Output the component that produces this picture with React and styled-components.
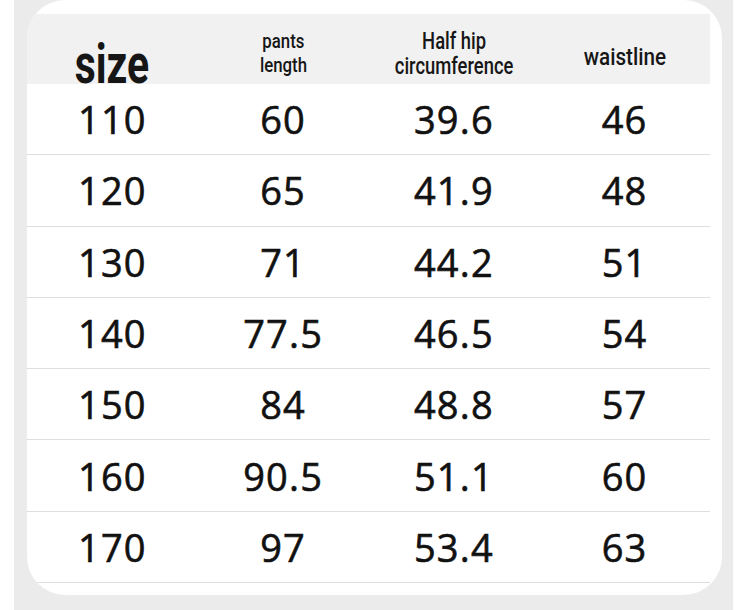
import React from "react";
import styled, { createGlobalStyle } from "styled-components";

const GlobalStyle = createGlobalStyle`
  html, body {
    margin: 0;
    padding: 0;
    background: #ffffff;
  }
`;

const rows = [
  ["110", "60", "39.6", "46"],
  ["120", "65", "41.9", "48"],
  ["130", "71", "44.2", "51"],
  ["140", "77.5", "46.5", "54"],
  ["150", "84", "48.8", "57"],
  ["160", "90.5", "51.1", "60"],
  ["170", "97", "53.4", "63"],
];

const App = () => {
  return (
    <>
      <GlobalStyle />
      <Panel>
        <Card>
          <HeadRow>
            <HeadCell $big>
              <Label $size={56} $weight={700} $scale={0.73}>
                size
              </Label>
            </HeadCell>
            <HeadCell $pad={7}>
              <Label $size={21} $scale={0.8}>
                pants
                <br />
                length
              </Label>
            </HeadCell>
            <HeadCell $pad={5}>
              <Label $size={23} $scale={0.8} $lh={25}>
                Half hip
                <br />
                circumference
              </Label>
            </HeadCell>
            <HeadCell $pad={15}>
              <Label $size={24} $scale={0.86}>
                waistline
              </Label>
            </HeadCell>
          </HeadRow>
          {rows.map((row) => (
            <Row key={row[0]}>
              {row.map((v, i) => (
                <Cell key={i}>{v}</Cell>
              ))}
            </Row>
          ))}
        </Card>
      </Panel>
    </>
  );
};

const Panel = styled.div`
  margin-left: 14px;
  width: 719px;
  height: 610px;
  box-sizing: border-box;
  background: #ebebeb;
  padding: 0 11px 15px 13px;
`;

const Card = styled.div`
  height: 595px;
  box-sizing: border-box;
  background: #ffffff;
  border-radius: 38px;
  overflow: hidden;
  padding: 14px 12px 0 0;
`;

const HeadRow = styled.div`
  display: grid;
  grid-template-columns: repeat(4, 1fr);
  height: 70px;
  background: #f1f1f1;
`;

const HeadCell = styled.div`
  display: flex;
  justify-content: center;
  align-items: flex-end;
  padding-bottom: ${(p) => (p.$big ? 0 : p.$pad || 0)}px;
  margin-bottom: ${(p) => (p.$big ? -8 : 0)}px;
`;

const Label = styled.div`
  display: inline-block;
  font-family: Roboto, "Liberation Sans", sans-serif;
  font-size: ${(p) => p.$size}px;
  font-weight: ${(p) => p.$weight || 500};
  line-height: ${(p) => (p.$size > 30 ? p.$size : p.$lh || 24)}px;
  color: #161616;
  text-align: center;
  transform: scaleX(${(p) => p.$scale});
  white-space: nowrap;
`;

const Row = styled.div`
  display: grid;
  grid-template-columns: repeat(4, 1fr);
  height: 71.3px;
  box-sizing: border-box;
  border-bottom: 1.5px solid #dedede;
`;

const Cell = styled.div`
  display: flex;
  align-items: center;
  justify-content: center;
  font-family: "Open Sans", "Noto Sans", sans-serif;
  font-size: 38px;
  font-weight: 400;
  -webkit-text-stroke: 0.6px #111111;
  letter-spacing: 1.2px;
  color: #111111;
`;

export default App;
